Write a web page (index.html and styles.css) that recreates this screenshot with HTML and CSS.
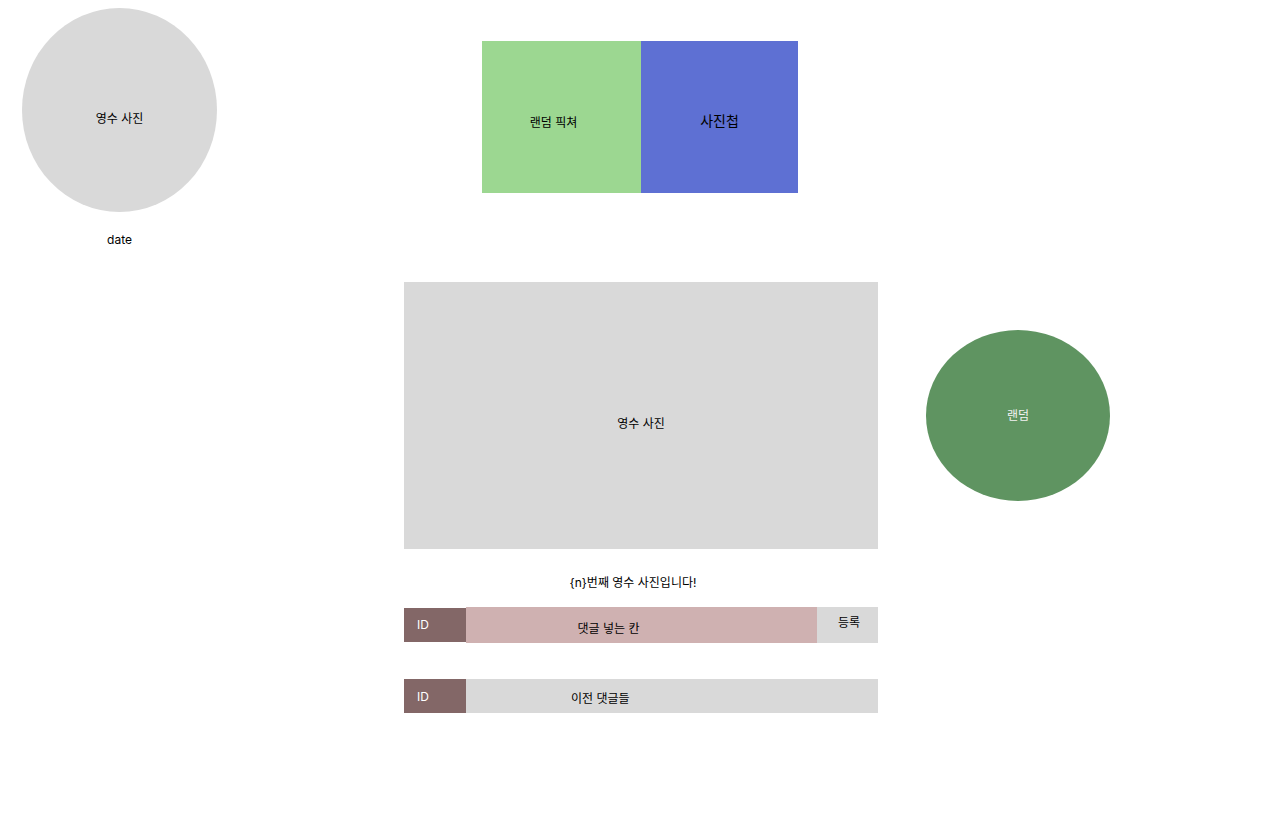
FILE: index.html
```html
<!DOCTYPE html>
<html lang="ko">
<head>
<meta charset="utf-8">
<title>영수 사진</title>
<link rel="stylesheet" href="styles.css">
</head>
<body>
<div class="page">
  <header class="top">
    <div class="profile">
      <div class="avatar"><span>영수 사진</span></div>
      <div class="date">date</div>
    </div>
    <nav class="tabs">
      <div class="tab tab-random"><span>랜덤 픽쳐</span></div>
      <div class="tab tab-album"><span>사진첩</span></div>
    </nav>
  </header>
  <section class="content">
    <div class="main">
      <div class="photo"><span>영수 사진</span></div>
      <p class="caption">{n}번째 영수 사진입니다!</p>
      <div class="row comment-input">
        <div class="id">ID</div>
        <div class="field"><span>댓글 넣는 칸</span></div>
        <div class="submit"><span>등록</span></div>
      </div>
      <div class="row comment-prev">
        <div class="id">ID</div>
        <div class="prev"><span>이전 댓글들</span></div>
      </div>
    </div>
    <div class="random"><span>랜덤</span></div>
  </section>
</div>
</body>
</html>
```

FILE: styles.css
```css
* { box-sizing: border-box; }
html, body { margin: 0; padding: 0; background: #ffffff; }
body {
  font-family: Inter, "Noto Sans CJK KR", sans-serif;
  font-size: 12px;
  color: #000000;
}
.page { width: 1280px; height: 832px; overflow: hidden; }

.top { display: flex; align-items: flex-start; }
.profile {
  padding: 8px 0 0 22px;
  display: flex;
  flex-direction: column;
  align-items: center;
  width: 217px;
}
.avatar {
  width: 195px;
  height: 204px;
  border-radius: 50%;
  background: #d9d9d9;
  display: flex;
  align-items: center;
  justify-content: center;
  padding-top: 14px;
}
.date { margin-top: 20px; line-height: 16px; }

.tabs { display: flex; margin: 41px 0 0 265px; }
.tab {
  height: 152px;
  display: flex;
  align-items: center;
  justify-content: center;
}
.tab-random { width: 159px; background: #9cd791; padding: 8px 16px 0 0; font-size: 12px; }
.tab-album { width: 157px; background: #5e70d3; padding-top: 6px; font-size: 14px; }

.content { display: flex; align-items: flex-start; padding: 34px 0 0 404px; }
.main { width: 474px; display: flex; flex-direction: column; }
.photo {
  height: 267px;
  background: #d9d9d9;
  display: flex;
  align-items: center;
  justify-content: center;
  padding-top: 13px;
}
.caption {
  margin: 26px 0 0;
  text-align: center;
  line-height: 16px;
  padding-right: 16px;
}
.row { display: flex; }
.comment-input { margin-top: 16px; height: 36px; }
.comment-input .id { margin: 1px 0; }
.comment-prev { margin-top: 36px; height: 34px; }
.id {
  width: 62px;
  background: #836767;
  color: #ffffff;
  padding-left: 13px;
  display: flex;
  align-items: center;
}
.comment-input .id { padding-bottom: 1px; }
.field {
  width: 351px;
  background: #cfb1b1;
  display: flex;
  align-items: center;
  justify-content: center;
  padding: 5px 66px 0 0;
}
.submit {
  flex: 1;
  background: #d9d9d9;
  display: flex;
  align-items: center;
  justify-content: center;
  padding: 0 0 8px 3px;
}
.prev {
  flex: 1;
  background: #d9d9d9;
  display: flex;
  align-items: center;
  padding: 2px 0 0 105px;
}

.random {
  width: 184px;
  height: 171px;
  margin: 48px 0 0 48px;
  border-radius: 50%;
  background: #5f9461;
  color: #f2f2f2;
  display: flex;
  align-items: center;
  justify-content: center;
  padding-bottom: 2px;
}
```
